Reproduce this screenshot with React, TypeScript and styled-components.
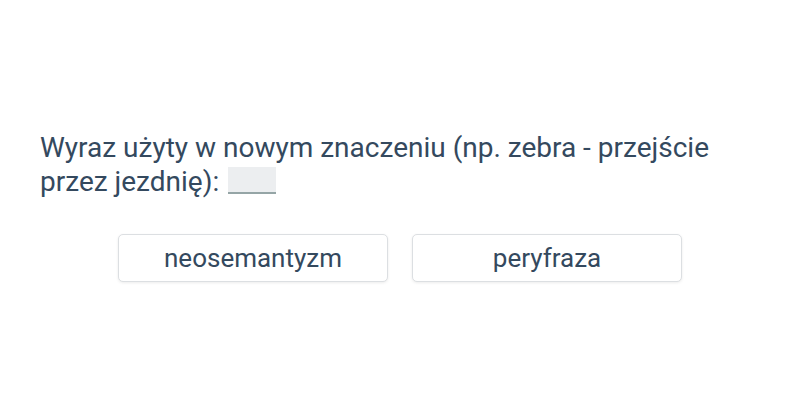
import React from "react";
import styled, { createGlobalStyle } from "styled-components";

const GlobalStyle = createGlobalStyle`
  html, body {
    margin: 0;
    padding: 0;
    background: #fff;
  }
  body {
    font-family: Roboto, "Liberation Sans", sans-serif;
    color: #34495e;
  }
`;

const Page = styled.div`
  width: 800px;
  height: 400px;
  display: flex;
  align-items: center;
  justify-content: center;
  box-sizing: border-box;
  padding: 12px 40px 0;
`;

const Card = styled.div`
  width: 100%;
  display: flex;
  flex-direction: column;
  gap: 35px;
`;

const Question = styled.p`
  margin: 0;
  font-size: 28px;
  line-height: 34px;
`;

const Blank = styled.span`
  display: inline-block;
  width: 48px;
  height: 25px;
  margin-left: 2px;
  background: #eceef0;
  border-bottom: 2px solid #95a5a6;
  vertical-align: -3px;
`;

const Options = styled.div`
  display: flex;
  justify-content: center;
  gap: 24px;
`;

const Option = styled.button`
  width: 270px;
  height: 48px;
  background: #fff;
  border: 1px solid #dcdfe2;
  border-radius: 5px;
  box-shadow: 0 1px 3px rgba(0, 0, 0, 0.08);
  font-family: Roboto, "Liberation Sans", sans-serif;
  font-size: 26px;
  color: #34495e;
  cursor: pointer;
`;

export default function App() {
  return (
    <>
      <GlobalStyle />
      <Page>
        <Card>
          <Question>
            Wyraz użyty w nowym znaczeniu (np. zebra - przejście przez jezdnię):{" "}
            <Blank />
          </Question>
          <Options>
            <Option>neosemantyzm</Option>
            <Option>peryfraza</Option>
          </Options>
        </Card>
      </Page>
    </>
  );
}
